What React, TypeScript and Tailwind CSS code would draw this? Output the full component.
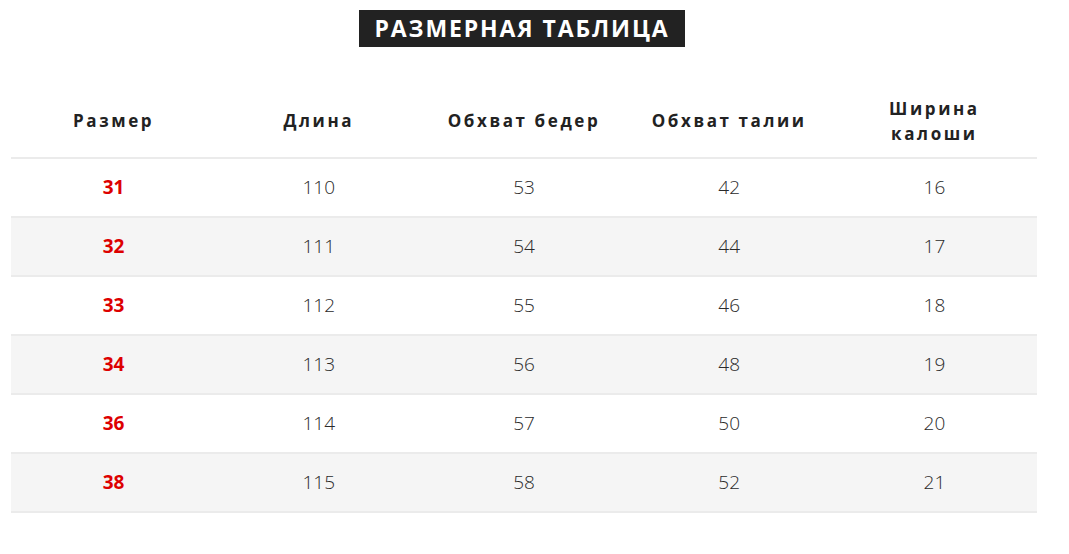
const rows = [
  ['31', '110', '53', '42', '16'],
  ['32', '111', '54', '44', '17'],
  ['33', '112', '55', '46', '18'],
  ['34', '113', '56', '48', '19'],
  ['36', '114', '57', '50', '20'],
  ['38', '115', '58', '52', '21'],
]

const headers = ['Размер', 'Длина', 'Обхват бедер', 'Обхват талии', 'Ширина калоши']

export default function App() {
  return (
    <div className="min-h-[554px] w-[1069px] bg-white font-['Open_Sans',sans-serif]">
      <div className="pt-[10px] pl-[359px]">
        <h1 className="flex h-[37px] w-[326px] items-center justify-center bg-[#222222] text-[23px] font-bold uppercase tracking-[1.9px] text-white">
          Размерная таблица
        </h1>
      </div>

      <div className="ml-[11px] mt-[33px] w-[1026px]">
        <div className="grid h-[79px] grid-cols-5 items-center border-b-2 border-[#ebebeb] pt-[4px]">
          {headers.map((h, i) => (
            <div
              key={h}
              className={
                'mx-auto text-center text-[17px] leading-[25px] font-bold tracking-[2.6px] text-[#222222] ' +
                (i === 4 ? 'max-w-[110px]' : 'whitespace-nowrap')
              }
            >
              {h}
            </div>
          ))}
        </div>

        {rows.map((r, i) => (
          <div
            key={r[0]}
            className={
              'grid h-[59px] grid-cols-5 items-center border-b-2 border-[#ebebeb] ' +
              (i % 2 === 1 ? 'bg-[#f5f5f5]' : 'bg-white')
            }
          >
            {r.map((v, j) => (
              <div
                key={j}
                className={
                  j === 0
                    ? 'text-center text-[19px] font-bold text-[#dd0000]'
                    : 'text-center text-[19px] font-light text-[#2a2a2a]'
                }
              >
                {v}
              </div>
            ))}
          </div>
        ))}
      </div>
    </div>
  )
}
